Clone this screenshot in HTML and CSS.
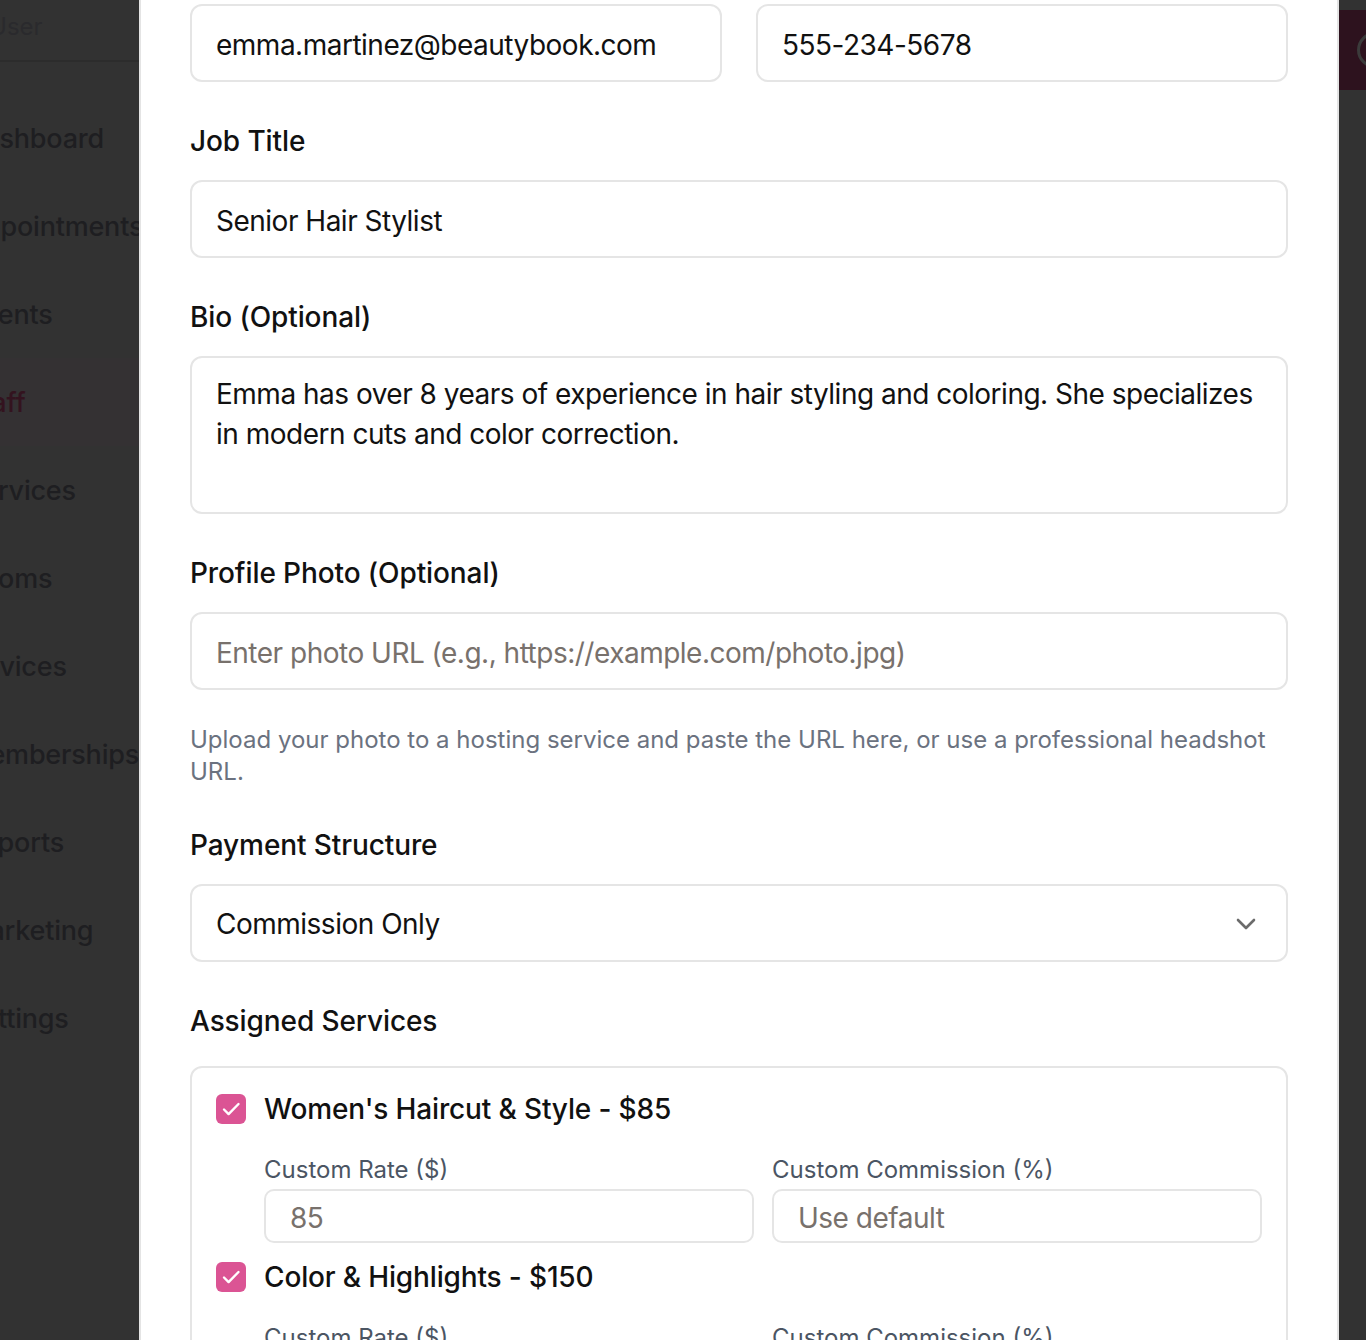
FILE: index.html
```html
<!DOCTYPE html>
<html lang="en">
<head>
<meta charset="utf-8">
<title>Edit Staff</title>
<link rel="stylesheet" href="styles.css">
</head>
<body>
<div class="page">
  <aside class="sidebar">
    <div class="sidebar-inner">
      <div class="user">Admin User</div>
      <nav class="nav">
        <div class="nav-item">Dashboard</div>
        <div class="nav-item">Appointments</div>
        <div class="nav-item">Clients</div>
        <div class="nav-item active">Staff</div>
        <div class="nav-item">Services</div>
        <div class="nav-item">Rooms</div>
        <div class="nav-item">Devices</div>
        <div class="nav-item">Memberships</div>
        <div class="nav-item">Reports</div>
        <div class="nav-item">Marketing</div>
        <div class="nav-item">Settings</div>
      </nav>
    </div>
  </aside>

  <main class="modal">
    <div class="row2">
      <div class="input">emma.martinez@beautybook.com</div>
      <div class="input">555-234-5678</div>
    </div>

    <div class="field">
      <div class="label">Job Title</div>
      <div class="input">Senior Hair Stylist</div>
    </div>

    <div class="field">
      <div class="label">Bio (Optional)</div>
      <div class="input textarea">Emma has over 8 years of experience in hair styling and coloring. She specializes in modern cuts and color correction.</div>
    </div>

    <div class="field">
      <div class="label">Profile Photo (Optional)</div>
      <div class="input placeholder">Enter photo URL (e.g., https://example.com/photo.jpg)</div>
      <p class="help">Upload your photo to a hosting service and paste the URL here, or use a professional headshot URL.</p>
    </div>

    <div class="field field-after-help">
      <div class="label">Payment Structure</div>
      <div class="input select">
        <span>Commission Only</span>
        <svg class="chev" width="20" height="12" viewBox="0 0 20 12"><path d="M2 2l8 8 8-8" fill="none" stroke="#6b6b6b" stroke-width="2.6" stroke-linecap="round" stroke-linejoin="round"/></svg>
      </div>
    </div>

    <div class="field">
      <div class="label label-services">Assigned Services</div>
      <div class="services">
        <div class="service">
          <div class="check-row">
            <span class="checkbox"><svg width="30" height="30" viewBox="0 0 30 30"><path d="M8 15.5l4.6 4.6L22.5 10" fill="none" stroke="#fff" stroke-width="2.4" stroke-linecap="round" stroke-linejoin="round"/></svg></span>
            <span class="service-name">Women's Haircut &amp; Style - $85</span>
          </div>
          <div class="sub-grid">
            <div class="sub-field">
              <div class="sub-label">Custom Rate ($)</div>
              <div class="sub-input">85</div>
            </div>
            <div class="sub-field">
              <div class="sub-label">Custom Commission (%)</div>
              <div class="sub-input">Use default</div>
            </div>
          </div>
        </div>
        <div class="service">
          <div class="check-row">
            <span class="checkbox"><svg width="30" height="30" viewBox="0 0 30 30"><path d="M8 15.5l4.6 4.6L22.5 10" fill="none" stroke="#fff" stroke-width="2.4" stroke-linecap="round" stroke-linejoin="round"/></svg></span>
            <span class="service-name">Color &amp; Highlights - $150</span>
          </div>
          <div class="sub-grid">
            <div class="sub-field">
              <div class="sub-label">Custom Rate ($)</div>
              <div class="sub-input">150</div>
            </div>
            <div class="sub-field">
              <div class="sub-label">Custom Commission (%)</div>
              <div class="sub-input">Use default</div>
            </div>
          </div>
        </div>
      </div>
    </div>
  </main>

  <div class="right-strip">
    <div class="topbar"><span class="ring"></span></div>
  </div>
</div>
</body>
</html>
```

FILE: styles.css
```css
* { box-sizing: border-box; }
html, body { margin: 0; padding: 0; }
body {
  background: #323232;
  font-family: Inter, "Noto Sans", "Liberation Sans", sans-serif;
  color: #111;
  height: 1340px;
  overflow: hidden;
}
.page {
  display: flex;
  height: 1340px;
}
.sidebar {
  width: 139px;
  flex: 0 0 139px;
  overflow: hidden;
  background: #323232;
}
.sidebar-inner {
  margin-left: -35px;
  width: 400px;
}
.user {
  height: 62px;
  padding-top: 12px;
  margin-left: -55px;
  font-size: 24px;
  color: #2a2a2d;
  border-bottom: 2px solid #2c2c2c;
}
.nav { padding-top: 32px; }
.nav-item {
  height: 88px;
  display: flex;
  align-items: center;
  font-size: 27px;
  font-weight: 500;
  letter-spacing: -0.2px;
  color: #1e1e21;
}
.nav-item.active {
  color: #33131f;
  background: #343133;
}

.modal {
  width: 1200px;
  flex: 0 0 1200px;
  background: #fff;
  border-left: 2px solid #e4e4e4;
  border-right: 2px solid #e4e4e4;
  padding: 4px 49px 0 49px;
  overflow: hidden;
}
.row2 {
  display: grid;
  grid-template-columns: 1fr 1fr;
  gap: 34px;
}
.input {
  height: 78px;
  border: 2px solid #e5e5e5;
  border-radius: 12px;
  padding: 3px 24px 0;
  display: flex;
  align-items: center;
  font-size: 28px;
  letter-spacing: -0.5px;
  color: #111;
  white-space: nowrap;
}
.input.placeholder { color: #78716c; }
.input.textarea {
  height: 158px;
  align-items: flex-start;
  white-space: normal;
  line-height: 40px;
  padding-top: 16px;
}
.input.select { justify-content: space-between; padding: 2px 30px 0 24px; }
.chev { display: block; }

.field { margin-top: 39px; }
.field-after-help { margin-top: 37px; }
.label {
  font-size: 28px;
  font-weight: 500;
  line-height: 40px;
  margin-bottom: 19px;
  color: #111;
  letter-spacing: -0.1px;
}
.label-services { margin-bottom: 25px; }
.help {
  margin: 34px 0 0;
  font-size: 24px;
  line-height: 32px;
  color: #6b7280;
}

.services {
  border: 2px solid #e5e5e5;
  border-radius: 12px;
  padding: 21px 24px 0;
  display: flex;
  flex-direction: column;
  gap: 14px;
}
.check-row {
  display: flex;
  align-items: center;
  gap: 18px;
  height: 40px;
}
.checkbox {
  width: 30px;
  height: 30px;
  border-radius: 6px;
  background: #db5494;
  display: flex;
}
.service-name {
  font-size: 28px;
  font-weight: 500;
  letter-spacing: -0.15px;
  color: #111;
}
.sub-grid {
  margin: 24px 0 0 48px;
  display: grid;
  grid-template-columns: 1fr 1fr;
  gap: 18px;
}
.sub-label {
  font-size: 24px;
  line-height: 34px;
  color: #4b5563;
  margin-bottom: 2px;
}
.sub-input {
  height: 54px;
  border: 2px solid #e5e5e5;
  border-radius: 10px;
  padding: 3px 24px 0;
  display: flex;
  align-items: center;
  font-size: 28px;
  letter-spacing: -0.5px;
  color: #78716c;
}

.right-strip {
  flex: 1;
  background: #323232;
  padding-top: 10px;
}
.topbar {
  height: 80px;
  background: #2d121e;
  position: relative;
  overflow: hidden;
}
.ring {
  position: absolute;
  left: 18px;
  top: 22px;
  width: 36px;
  height: 36px;
  border-radius: 50%;
  border: 3px solid #3b3b3b;
}
```
